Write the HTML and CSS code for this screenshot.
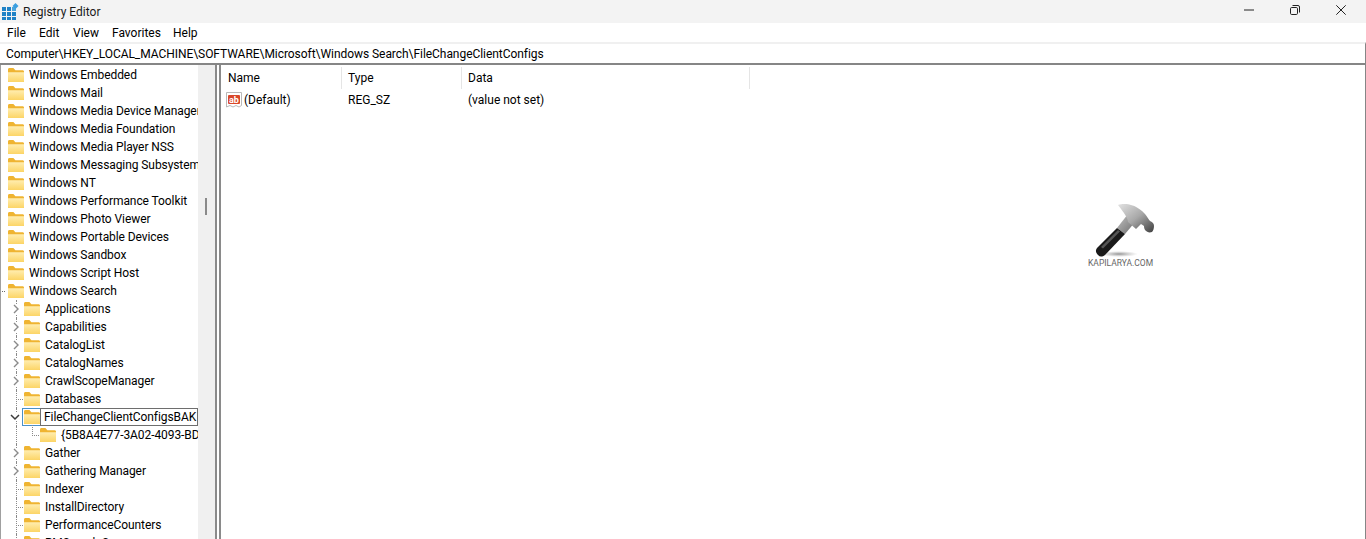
FILE: index.html
```html
<!DOCTYPE html>
<html lang="en">
  <head>
    <meta charset="UTF-8" />
    <title>Registry Editor</title>
    <link rel="stylesheet" href="styles.css">
  </head>
  <body>
    <svg class="defs" width="0" height="0" aria-hidden="true">
      <defs>
        <linearGradient id="folderFront" x1="0" y1="0" x2="0" y2="1">
          <stop offset="0" stop-color="#ffedb0" />
          <stop offset="1" stop-color="#fcd566" />
        </linearGradient>
        <symbol id="folder" viewBox="0 0 16 14">
          <path d="M0 1.500C0 .7.6 0 1.400 0h4l2 2.200h7.200c.8 0 1.400.6 1.400 1.400V13c0 .6-.5 1-1 1H1c-.6 0-1-.4-1-1z" fill="#efb431" />
          <path d="M0 4.200h16V13c0 .6-.5 1-1 1H1c-.6 0-1-.4-1-1z" fill="url(#folderFront)" />
        </symbol>
        <symbol id="chevron-right" viewBox="0 0 8 10">
          <path d="M2 1l4 4-4 4" fill="none" stroke="#8a8a8a" stroke-width="1.400" />
        </symbol>
        <symbol id="chevron-down" viewBox="0 0 10 8">
          <path d="M1 2l4 4 4-4" fill="none" stroke="#3c3c3c" stroke-width="1.500" />
        </symbol>
      </defs>
    </svg>

    <div id="app">
      <!-- title bar -->
      <div class="title-bar">
        <div class="title">
          <svg class="app-icon" viewBox="0 0 17 17" width="17" height="17">
            <g fill="#1f82c6">
              <rect x="0" y="4" width="4" height="4" />
              <rect x="5" y="4" width="4" height="4" />
              <rect x="0" y="9" width="4" height="4" />
              <rect x="5" y="9" width="4" height="4" />
              <rect x="10" y="9" width="4" height="4" />
              <rect x="0" y="14" width="4" height="3" />
              <rect x="5" y="14" width="4" height="3" />
              <rect x="10" y="14" width="4" height="3" />
            </g>
            <rect x="10" y="4" width="4" height="4" fill="#4aa5dc" />
            <path d="M13.500 0l3 3-3 3-3-3z" fill="#3b9fe0" />
          </svg>
          <span>Registry Editor</span>
        </div>
        <div class="window-controls">
          <svg viewBox="0 0 10 10" width="10" height="10"><path d="M0 5h10" stroke="#222" /></svg>
          <svg viewBox="0 0 10 10" width="10" height="10">
            <rect x=".5" y="2.500" width="7" height="7" rx="1.200" fill="none" stroke="#222" />
            <path d="M2.500.5h5.500a1.500 1.500 0 0 1 1.500 1.500v5.500" fill="none" stroke="#222" />
          </svg>
          <svg viewBox="0 0 10 10" width="10" height="10"><path d="M.3.3l9.400 9.400M9.700.3L.3 9.700" stroke="#222" /></svg>
        </div>
      </div>

      <!-- menu -->
      <div class="menu-bar">
        <span class="menu-file">File</span>
        <span class="menu-edit">Edit</span>
        <span class="menu-view">View</span>
        <span class="menu-fav">Favorites</span>
        <span>Help</span>
      </div>

      <!-- address -->
      <div class="address-bar">Computer\HKEY_LOCAL_MACHINE\SOFTWARE\Microsoft\Windows Search\FileChangeClientConfigs</div>

      <div class="panes">
        <!-- tree -->
        <div class="tree-pane">
          <div class="tree">
            <div class="row"><svg class="folder"><use href="#folder" /></svg><span>Windows Embedded</span></div>
            <div class="row"><svg class="folder"><use href="#folder" /></svg><span>Windows Mail</span></div>
            <div class="row"><svg class="folder"><use href="#folder" /></svg><span>Windows Media Device Manager</span></div>
            <div class="row"><svg class="folder"><use href="#folder" /></svg><span>Windows Media Foundation</span></div>
            <div class="row"><svg class="folder"><use href="#folder" /></svg><span>Windows Media Player NSS</span></div>
            <div class="row"><svg class="folder"><use href="#folder" /></svg><span>Windows Messaging Subsystem</span></div>
            <div class="row"><svg class="folder"><use href="#folder" /></svg><span>Windows NT</span></div>
            <div class="row"><svg class="folder"><use href="#folder" /></svg><span>Windows Performance Toolkit</span></div>
            <div class="row"><svg class="folder"><use href="#folder" /></svg><span>Windows Photo Viewer</span></div>
            <div class="row"><svg class="folder"><use href="#folder" /></svg><span>Windows Portable Devices</span></div>
            <div class="row"><svg class="folder"><use href="#folder" /></svg><span>Windows Sandbox</span></div>
            <div class="row"><svg class="folder"><use href="#folder" /></svg><span>Windows Script Host</span></div>
            <div class="row open"><svg class="folder"><use href="#folder" /></svg><span>Windows Search</span></div>
            <div class="row child"><svg class="chev"><use href="#chevron-right" /></svg><svg class="folder"><use href="#folder" /></svg><span>Applications</span></div>
            <div class="row child"><svg class="chev"><use href="#chevron-right" /></svg><svg class="folder"><use href="#folder" /></svg><span>Capabilities</span></div>
            <div class="row child"><svg class="chev"><use href="#chevron-right" /></svg><svg class="folder"><use href="#folder" /></svg><span>CatalogList</span></div>
            <div class="row child"><svg class="chev"><use href="#chevron-right" /></svg><svg class="folder"><use href="#folder" /></svg><span>CatalogNames</span></div>
            <div class="row child"><svg class="chev"><use href="#chevron-right" /></svg><svg class="folder"><use href="#folder" /></svg><span>CrawlScopeManager</span></div>
            <div class="row child leaf"><svg class="folder"><use href="#folder" /></svg><span>Databases</span></div>
            <div class="row child selected">
              <svg class="chev-down"><use href="#chevron-down" /></svg>
              <div class="focus-box"><svg class="folder"><use href="#folder" /></svg></div>
              <div class="edit-box">FileChangeClientConfigsBAK</div>
            </div>
            <div class="row child grandchild"><svg class="folder"><use href="#folder" /></svg><span>{5B8A4E77-3A02-4093-BD</span></div>
            <div class="row child"><svg class="chev"><use href="#chevron-right" /></svg><svg class="folder"><use href="#folder" /></svg><span>Gather</span></div>
            <div class="row child"><svg class="chev"><use href="#chevron-right" /></svg><svg class="folder"><use href="#folder" /></svg><span>Gathering Manager</span></div>
            <div class="row child leaf"><svg class="folder"><use href="#folder" /></svg><span>Indexer</span></div>
            <div class="row child leaf"><svg class="folder"><use href="#folder" /></svg><span>InstallDirectory</span></div>
            <div class="row child leaf"><svg class="folder"><use href="#folder" /></svg><span>PerformanceCounters</span></div>
            <div class="row child leaf"><svg class="folder"><use href="#folder" /></svg><span>RMSearch Svc</span></div>
          </div>
          <div class="scrollbar"><div class="thumb"></div></div>
        </div>

        <!-- values -->
        <div class="list-pane">
          <div class="list-head">
            <div class="col-name">Name</div>
            <div class="col-type">Type</div>
            <div class="col-data">Data</div>
          </div>
          <div class="list-row">
            <div class="col-name">
              <svg class="ab-icon" viewBox="0 0 16 16" width="16" height="16">
                <path d="M.5 .5h15v13l-2.500 1.500-3-1.500-3 1.500-3-1.500-3.500 1.500z" fill="#fff" stroke="#b9b9b9" />
                <rect x="2" y="3" width="12" height="9" rx="1" fill="#d9472b" />
                <text x="8" y="10.500" class="ab-text">ab</text>
              </svg>
              <span>(Default)</span>
            </div>
            <div class="col-type">REG_SZ</div>
            <div class="col-data">(value not set)</div>
          </div>

          <!-- watermark -->
          <div class="watermark">
            <svg viewBox="0 0 70 58" width="70" height="58">
              <defs>
                <linearGradient id="steel" x1="0" y1="0" x2="1" y2="1">
                  <stop offset="0" stop-color="#e2e2e2" />
                  <stop offset=".5" stop-color="#a8a8a8" />
                  <stop offset="1" stop-color="#3f3f3f" />
                </linearGradient>
                <linearGradient id="neck" x1="0" y1="0" x2="1" y2="1">
                  <stop offset="0" stop-color="#c4c4c4" />
                  <stop offset="1" stop-color="#6a6a6a" />
                </linearGradient>
                <radialGradient id="shade" cx=".5" cy=".5" r=".5">
                  <stop offset="0" stop-color="#666" stop-opacity=".7" />
                  <stop offset="1" stop-color="#999" stop-opacity="0" />
                </radialGradient>
              </defs>
              <ellipse cx="33" cy="53" rx="19" ry="3" fill="url(#shade)" />
              <path d="M31 27l11-14 8 7-11 13z" fill="url(#neck)" />
              <path d="M11 47L31 27l8 6-20 21c-3 2-5 2-7 0s-3-4-1-7z" fill="#1a1a1a" />
              <path d="M15 46l17-17 2 1.500-17 17z" fill="#555" />
              <path d="M32 4c6-2 17-2 27 9 2 2 3 5 5 7 3 1 4 3 4 5 0 3-1 5-2 6-3 1-5 0-7-2-1-2-1-3-1-4l-3-2-5 5-8-7c0-4-4-9-10-17z" fill="url(#steel)" />
            </svg>
            <div class="wm-text">KAPILARYA.COM</div>
          </div>
        </div>
      </div>
    </div>
  </body>
</html>
```

FILE: styles.css
```css
* {
  box-sizing: border-box;
  margin: 0;
  padding: 0;
}

body,
html {
  height: 100%;
  overflow: hidden;
  font-family: Roboto, "Noto Sans", sans-serif;
  font-size: 12px;
  color: #000;
  background-color: #fff;
}

.defs {
  position: absolute;
}

#app {
  height: 539px;
  display: flex;
  flex-direction: column;
}

/* title bar */
.title-bar {
  height: 23px;
  flex: none;
  background-color: #f3f3f3;
  display: flex;
  justify-content: space-between;
  align-items: center;
  padding-left: 2px;
}

.title {
  display: flex;
  align-items: center;
  color: #1a1a1a;
}

.app-icon {
  margin-right: 4px;
}

.window-controls {
  display: flex;
  align-items: center;
  gap: 36px;
  padding-right: 20px;
  padding-bottom: 3px;
}

/* menu */
.menu-bar {
  height: 19px;
  flex: none;
  display: flex;
  align-items: center;
  padding-left: 7px;
}

.menu-file {
  width: 32px;
}

.menu-edit {
  width: 34px;
}

.menu-view {
  width: 39px;
}

.menu-fav {
  width: 61px;
}

/* address */
.address-bar {
  height: 23px;
  flex: none;
  border-top: 2px solid #f0f0f0;
  border-bottom: 2px solid #868686;
  border-right: 1px solid #868686;
  padding-left: 6px;
  line-height: 21px;
  letter-spacing: -0.05px;
  white-space: nowrap;
}

/* panes */
.panes {
  flex: 1;
  min-height: 0;
  display: flex;
}

.tree-pane {
  width: 217px;
  flex: none;
  display: flex;
  overflow: hidden;
  border-left: 1px solid #a0a0a0;
  border-right: 2px solid #8a8a8a;
}

.tree {
  width: 197px;
  flex: none;
  padding-top: 1px;
  overflow: hidden;
  letter-spacing: -0.08px;
}

.row {
  height: 18px;
  display: flex;
  align-items: center;
  position: relative;
  padding-left: 7px;
  white-space: nowrap;
}

.row span {
  margin-left: 5px;
}

.row > svg,
.row > div {
  position: relative;
}

/* tree lines */
.open::before {
  content: "";
  position: absolute;
  left: 1px;
  top: 9px;
  width: 3px;
  border-top: 1px dotted #6a6a6a;
}

.child {
  padding-left: 10px;
}

.child::after {
  content: "";
  position: absolute;
  left: 15px;
  top: 0;
  height: 18px;
  border-left: 1px dotted #8a8a8a;
}

.leaf {
  padding-left: 23px;
}

.leaf::before {
  content: "";
  position: absolute;
  left: 15px;
  top: 9px;
  width: 7px;
  border-top: 1px dotted #8a8a8a;
}

.grandchild {
  padding-left: 39px;
}

.grandchild::before {
  content: "";
  position: absolute;
  left: 31px;
  top: -1px;
  width: 8px;
  height: 10px;
  border-left: 1px dotted #8a8a8a;
  border-bottom: 1px dotted #8a8a8a;
}

.folder {
  width: 16px;
  height: 14px;
  flex: none;
}

.chev {
  width: 8px;
  height: 10px;
  margin-left: 1px;
  margin-right: 4px;
  flex: none;
  z-index: 1;
  background-color: #fff;
}

.chev-down {
  width: 10px;
  height: 8px;
  margin-left: -1px;
  margin-right: 2px;
  flex: none;
  z-index: 1;
  background-color: #fff;
}

.focus-box {
  width: 18px;
  height: 18px;
  flex: none;
  display: flex;
  align-items: center;
  justify-content: center;
  border: 1px solid #4a90c8;
  border-right: none;
}

.edit-box {
  flex: 1;
  height: 18px;
  padding-left: 3px;
  line-height: 16px;
  border: 1px solid #6e6e6e;
  background-color: #fff;
  overflow: hidden;
}

.scrollbar {
  flex: 1;
  position: relative;
  background-color: #f0f0f0;
}

.thumb {
  position: absolute;
  left: 7px;
  top: 133px;
  width: 2px;
  height: 17px;
  background-color: #8a8a8a;
}

/* values */
.list-pane {
  flex: 1;
  position: relative;
  margin-left: 2px;
  border-left: 2px solid #8a8a8a;
  border-right: 1px solid #868686;
}

.list-head,
.list-row {
  display: flex;
  height: 22px;
  align-items: center;
}

.list-head {
  height: 24px;
  padding-top: 2px;
}

.list-head > div {
  height: 100%;
  display: flex;
  align-items: center;
  border-right: 1px solid #e5e5e5;
}

.col-name {
  width: 121px;
  padding-left: 7px;
  display: flex;
  align-items: center;
}

.col-type {
  width: 120px;
  padding-left: 6px;
}

.col-data {
  width: 288px;
  padding-left: 6px;
}

.list-row .col-name {
  padding-left: 5px;
}

.ab-icon {
  margin-right: 2px;
  flex: none;
}

.ab-text {
  font-size: 9px;
  font-weight: 700;
  fill: #fff;
  text-anchor: middle;
}

.watermark {
  position: absolute;
  left: 865px;
  top: 136px;
  width: 70px;
}

.watermark svg {
  display: block;
}

.wm-text {
  font-size: 8.500px;
  line-height: 9px;
  margin-left: 2px;
  color: #666;
  white-space: nowrap;
}
```
